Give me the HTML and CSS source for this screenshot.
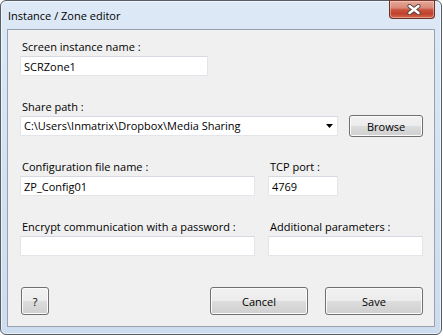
FILE: index.html
```html
<!DOCTYPE html>
<html>
<head>
<meta charset="utf-8">
<title>Instance / Zone editor</title>
<link rel="stylesheet" href="styles.css">
</head>
<body>
<div class="window">
  <div class="titlebar">
    <span class="title">Instance / Zone editor</span>
    <div class="close">
      <svg width="14" height="11" viewBox="0 0 14 11">
        <path d="M2.5 2 L11.5 9 M11.5 2 L2.5 9" stroke="#5a4440" stroke-width="4.2" stroke-linecap="round"/>
        <path d="M2.5 2 L11.5 9 M11.5 2 L2.5 9" stroke="#ffffff" stroke-width="2.4" stroke-linecap="round"/>
      </svg>
    </div>
  </div>
  <div class="panel">
    <div class="row">
      <div class="field w-name">
        <label class="label">Screen instance name :</label>
        <input class="input" type="text" value="SCRZone1">
      </div>
    </div>
    <div class="row row-gap">
      <div class="field w-combo">
        <label class="label">Share path :</label>
        <div class="combo">
          <span class="combo-text">C:\Users\Inmatrix\Dropbox\Media Sharing</span>
          <svg class="combo-arrow" width="7" height="4" viewBox="0 0 7 4"><path d="M0 0 H7 L3.5 4 Z" fill="#000"/></svg>
        </div>
      </div>
      <button class="btn btn-browse">Browse</button>
    </div>
    <div class="row row-gap">
      <div class="field w-left">
        <label class="label">Configuration file name :</label>
        <input class="input" type="text" value="ZP_Config01">
      </div>
      <div class="field w-port">
        <label class="label">TCP port :</label>
        <input class="input" type="text" value="4769">
      </div>
    </div>
    <div class="row row-gap">
      <div class="field w-left">
        <label class="label">Encrypt communication with a password :</label>
        <input class="input" type="password" value="">
      </div>
      <div class="field w-extra">
        <label class="label">Additional parameters :</label>
        <input class="input" type="text" value="">
      </div>
    </div>
    <div class="actions">
      <button class="btn btn-help">?</button>
      <button class="btn btn-cancel">Cancel</button>
      <button class="btn btn-save">Save</button>
    </div>
  </div>
</div>
</body>
</html>
```

FILE: styles.css
```css
* {
  box-sizing: border-box;
}

html,
body {
  margin: 0;
  background: #ffffff;
}

body {
  font-family: "Open Sans", "Noto Sans", sans-serif;
  font-size: 11px;
  color: #000000;
}

.window {
  width: 442px;
  height: 335px;
  border: 1px solid #565d66;
  border-radius: 6px;
  background: linear-gradient(180deg, #dde9f6 0%, #d3e1f2 50%, #cddcef 100%);
  box-shadow: inset 0 0 0 1px rgba(255, 255, 255, 0.6);
  display: flex;
  flex-direction: column;
  padding: 0 6px 7px 6px;
}

.titlebar {
  height: 28px;
  flex: none;
  display: flex;
  align-items: flex-start;
  padding-left: 1px;
}

.title {
  margin-top: 7px;
  line-height: 15px;
  color: #000000;
  white-space: nowrap;
}

.close {
  margin-left: auto;
  margin-top: -1px;
  width: 46px;
  height: 19px;
  border: 1px solid #6b3027;
  border-top-color: #7a3a30;
  border-radius: 0 0 4px 4px;
  background: linear-gradient(180deg, #e6a898 0%, #d98a78 40%, #c8533e 52%, #c0412c 75%, #d46a50 100%);
  box-shadow: inset 0 0 0 1px rgba(255, 220, 210, 0.45);
  display: flex;
  align-items: center;
  justify-content: center;
  padding-left: 3px;
}

.panel {
  flex: 1;
  border: 1px solid #97a2ae;
  background: #f0f0f0;
  padding: 9px 11px 0 12px;
  display: flex;
  flex-direction: column;
}

.row {
  display: flex;
  align-items: flex-end;
  gap: 13px;
}

.row-gap {
  margin-top: 23px;
}

.field {
  display: flex;
  flex-direction: column;
}

.w-name {
  width: 188px;
}

.w-combo {
  width: 318px;
}

.w-left {
  width: 235px;
}

.w-port {
  width: 70px;
}

.w-extra {
  width: 155px;
}

.label {
  display: block;
  line-height: 15px;
  padding-left: 2px;
  margin-bottom: 2px;
  white-space: nowrap;
}

.input {
  display: block;
  width: 100%;
  height: 20px;
  margin: 0;
  padding: 0 3px;
  border: 1px solid #e2e5ea;
  border-top-color: #d6dae0;
  background: #ffffff;
  font: inherit;
  color: #000000;
  line-height: 18px;
  outline: none;
}

.combo {
  height: 20px;
  border: 1px solid #e2e5ea;
  border-top-color: #d6dae0;
  background: #ffffff;
  display: flex;
  align-items: center;
  padding: 0 4px 0 3px;
}

.combo-text {
  flex: 1;
  white-space: nowrap;
  line-height: 18px;
}

.combo-arrow {
  flex: none;
}

.btn {
  margin: 0;
  padding: 0;
  font: inherit;
  color: #000000;
  border: 1px solid #707070;
  border-radius: 3px;
  background: linear-gradient(180deg, #f2f2f2 0%, #ebebeb 50%, #dddddd 50%, #cfcfcf 100%);
  box-shadow: inset 0 0 0 1px #fbfbfb;
  display: flex;
  align-items: center;
  justify-content: center;
  line-height: 15px;
}

.btn-browse {
  width: 74px;
  height: 22px;
  margin-left: -2px;
  margin-bottom: -1px;
}

.actions {
  display: flex;
  margin-top: 31px;
}

.actions .btn {
  height: 28px;
}

.btn-help {
  width: 28px;
  margin-left: 1px;
}

.btn-cancel {
  width: 98px;
  margin-left: auto;
}

.btn-save {
  width: 98px;
  margin-left: 17px;
}
```
